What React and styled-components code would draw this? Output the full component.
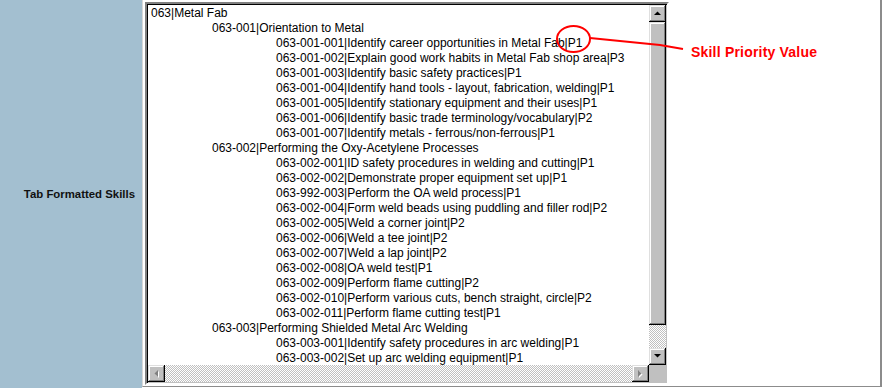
import React from 'react';
import styled, { createGlobalStyle } from 'styled-components';

const GlobalStyle = createGlobalStyle`
  html, body {
    margin: 0;
    padding: 0;
    background: #ffffff;
  }
`;

const skills = [
  [0, '063|Metal Fab'],
  [1, '063-001|Orientation to Metal'],
  [2, '063-001-001|Identify career opportunities in Metal Fab|P1'],
  [2, '063-001-002|Explain good work habits in Metal Fab shop area|P3'],
  [2, '063-001-003|Identify basic safety practices|P1'],
  [2, '063-001-004|Identify hand tools - layout, fabrication, welding|P1'],
  [2, '063-001-005|Identify stationary equipment and their uses|P1'],
  [2, '063-001-006|Identify basic trade terminology/vocabulary|P2'],
  [2, '063-001-007|Identify metals - ferrous/non-ferrous|P1'],
  [1, '063-002|Performing the Oxy-Acetylene Processes'],
  [2, '063-002-001|ID safety procedures in welding and cutting|P1'],
  [2, '063-002-002|Demonstrate proper equipment set up|P1'],
  [2, '063-992-003|Perform the OA weld process|P1'],
  [2, '063-002-004|Form weld beads using puddling and filler rod|P2'],
  [2, '063-002-005|Weld a corner joint|P2'],
  [2, '063-002-006|Weld a tee joint|P2'],
  [2, '063-002-007|Weld a lap joint|P2'],
  [2, '063-002-008|OA weld test|P1'],
  [2, '063-002-009|Perform flame cutting|P2'],
  [2, '063-002-010|Perform various cuts, bench straight, circle|P2'],
  [2, '063-002-011|Perform flame cutting test|P1'],
  [1, '063-003|Performing Shielded Metal Arc Welding'],
  [2, '063-003-001|Identify safety procedures in arc welding|P1'],
  [2, '063-003-002|Set up arc welding equipment|P1'],
];

const indents = [0, 61, 125];

const Page = styled.div`
  position: relative;
  display: flex;
  width: 882px;
  height: 388px;
  font-family: "Liberation Sans", Arial, sans-serif;
`;

const LabelCell = styled.div`
  width: 142px;
  flex-shrink: 0;
  background: #a3bfd0;
  display: flex;
  align-items: center;
  justify-content: flex-end;
  padding-right: 7px;
  box-sizing: border-box;
  font-weight: bold;
  font-size: 11.4px;
  color: #111;
`;

const FieldCell = styled.div`
  flex: 1;
  height: 387px;
  box-sizing: border-box;
  border-left: 1px solid #d8d8d8;
  border-right: 2px solid #8c8c8c;
  border-bottom: 1px solid #8c8c8c;
  padding: 2px 0 0 2px;
  background: #ffffff;
`;

const Box = styled.div`
  width: 524px;
  height: 383px;
  box-sizing: border-box;
  border-style: solid;
  border-width: 2px;
  border-color: #808080 #ffffff #ffffff #808080;
  box-shadow: inset 1px 1px #000000, inset -1px -1px #c0c0c0;
  padding: 1px;
  display: grid;
  grid-template-columns: 1fr 17px;
  grid-template-rows: 1fr 17px;
  background: #ffffff;
`;

const Content = styled.div`
  overflow: hidden;
  padding: 1px 0 0 3px;
  font-size: 12px;
  line-height: 15px;
  color: #000;
  white-space: nowrap;
`;

const Line = styled.div`
  padding-left: ${(p) => p.$indent}px;
`;

const VBar = styled.div`
  display: flex;
  flex-direction: column;
`;

const HBar = styled.div`
  display: flex;
`;

const Track = styled.div`
  flex: 1;
  display: flex;
  flex-direction: column;
  background: repeating-conic-gradient(#c0c0c0 0 25%, #ffffff 0 50%) 0 0 / 2px 2px;
`;

const Bevel = styled.div`
  background: #c0c0c0;
  box-shadow: inset -1px -1px #000000, inset 1px 1px #dfdfdf, inset -2px -2px #808080, inset 2px 2px #ffffff;
`;

const Button = styled(Bevel)`
  width: 17px;
  height: 17px;
  flex-shrink: 0;
  display: flex;
  align-items: center;
  justify-content: center;
`;

const Thumb = styled(Bevel)`
  height: 303px;
`;

const Corner = styled.div`
  background: #c0c0c0;
`;

const Arrow = ({ dir, disabled }) => {
  const shapes = {
    up: '0,4 7,4 3.5,0.5',
    down: '0,0 7,0 3.5,3.5',
    left: '4,0 4,7 0.5,3.5',
    right: '0,0 0,7 3.5,3.5',
  };
  const vertical = dir === 'up' || dir === 'down';
  const w = vertical ? 7 : 5;
  const h = vertical ? 5 : 8;
  return (
    <svg width={w} height={h} viewBox={`0 0 ${w} ${h}`}>
      {disabled && <polygon points={shapes[dir]} fill="#ffffff" transform="translate(1,1)" />}
      <polygon points={shapes[dir]} fill={disabled ? '#808080' : '#000000'} />
    </svg>
  );
};

const Overlay = styled.svg`
  position: absolute;
  left: 0;
  top: 0;
  pointer-events: none;
`;

const Callout = styled.span`
  position: absolute;
  left: 691px;
  top: 44px;
  font-size: 14px;
  font-weight: bold;
  letter-spacing: 0.2px;
  color: #ff0000;
  white-space: nowrap;
`;

export default function App() {
  return (
    <>
      <GlobalStyle />
      <Page>
        <LabelCell>Tab Formatted Skills</LabelCell>
        <FieldCell>
          <Box>
            <Content>
              {skills.map(([level, text]) => (
                <Line key={text} $indent={indents[level]}>{text}</Line>
              ))}
            </Content>
            <VBar>
              <Button><Arrow dir="up" /></Button>
              <Track>
                <Thumb />
              </Track>
              <Button><Arrow dir="down" /></Button>
            </VBar>
            <HBar>
              <Button><Arrow dir="left" disabled /></Button>
              <Track />
              <Button><Arrow dir="right" disabled /></Button>
            </HBar>
            <Corner />
          </Box>
        </FieldCell>
        <Overlay width="882" height="388">
          <ellipse cx="573.5" cy="39" rx="16.5" ry="13" fill="none" stroke="#ff0000" strokeWidth="2" />
          <polyline points="590,38 660,45 683,49" fill="none" stroke="#ff0000" strokeWidth="2" />
        </Overlay>
        <Callout>Skill Priority Value</Callout>
      </Page>
    </>
  );
}
